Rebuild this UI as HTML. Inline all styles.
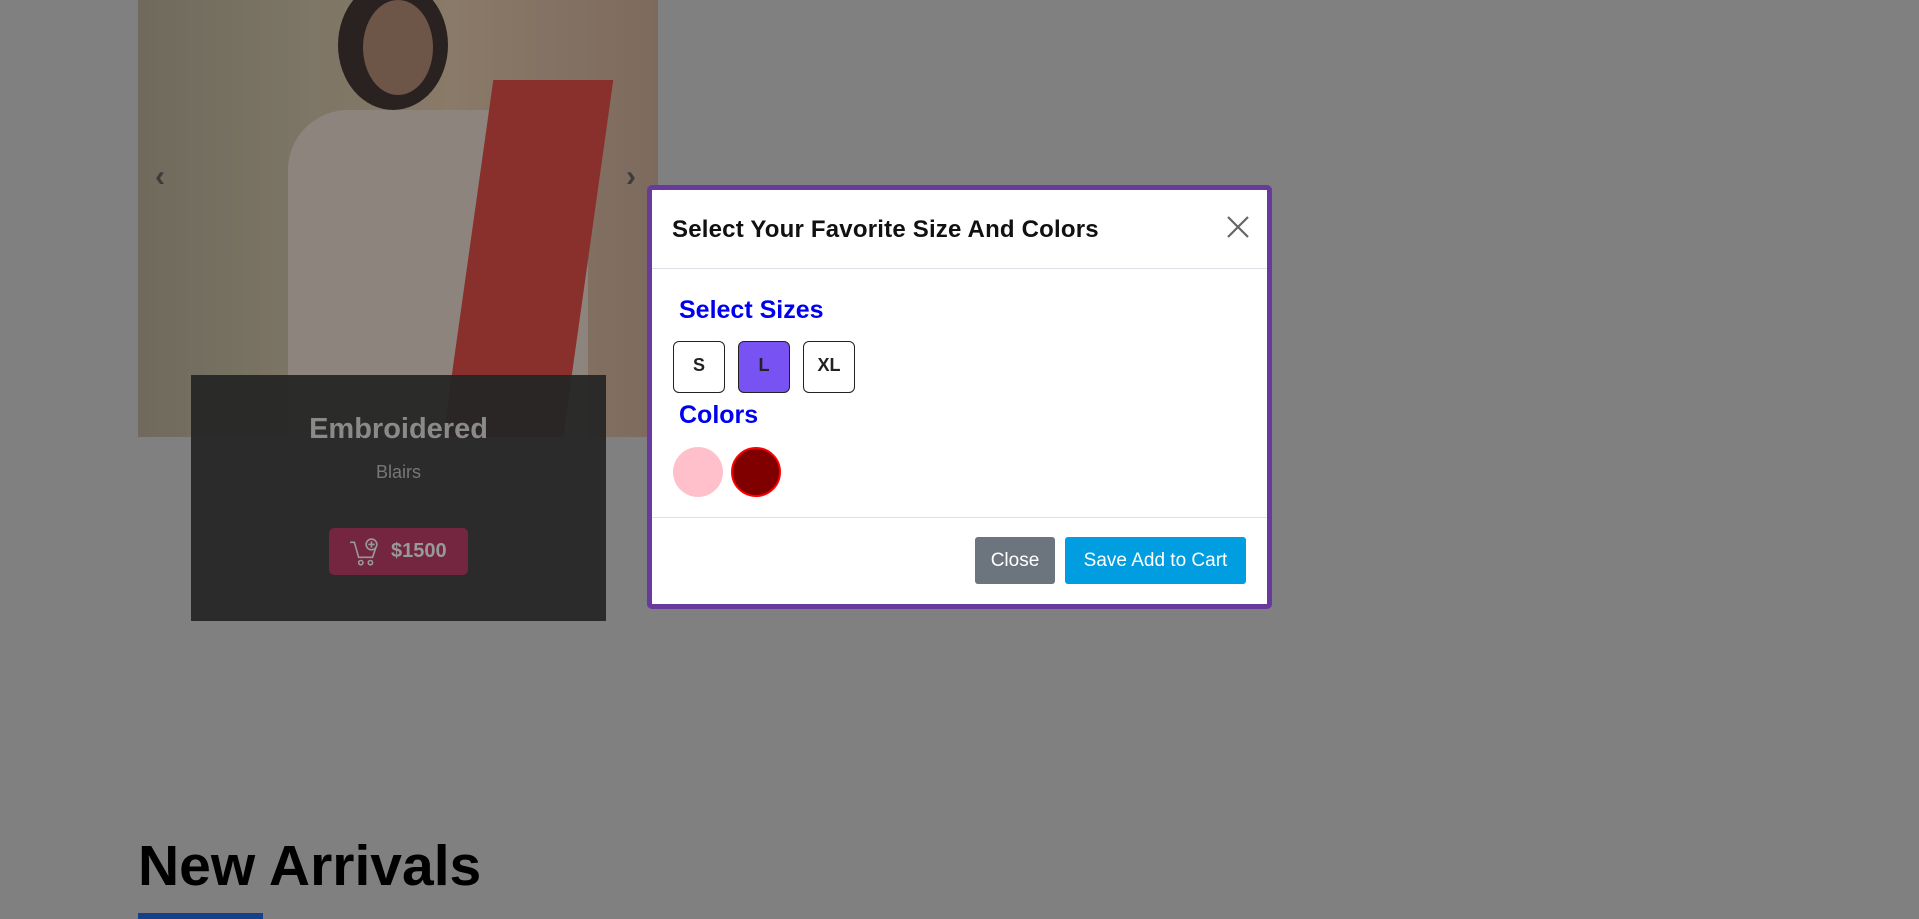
<!DOCTYPE html>
<html><head><meta charset="utf-8"><style>
*{box-sizing:border-box;margin:0;padding:0}
body{width:1919px;height:919px;overflow:hidden;background:#808080;font-family:"Liberation Sans",sans-serif;position:relative}
.img{position:absolute;left:138px;top:0;width:520px;height:437px;background:linear-gradient(90deg,#6f6a5c 0%,#7c7566 30%,#8a7a68 60%,#7d6a5e 100%);overflow:hidden}
.dress{position:absolute;left:150px;top:110px;width:300px;height:330px;background:#8d857d;border-radius:60px 60px 0 0}
.scarf{position:absolute;left:330px;top:80px;width:120px;height:360px;background:#8a302c;transform:skewX(-8deg)}
.head{position:absolute;left:200px;top:-20px;width:110px;height:130px;background:#2a2220;border-radius:50%}
.face{position:absolute;left:225px;top:0;width:70px;height:95px;background:#6d5548;border-radius:50%}
.arrow{position:absolute;top:160px;color:#3c3c3c;font-size:30px;font-weight:bold}
.cap{position:absolute;left:191px;top:375px;width:415px;height:246px;background:rgba(38,38,38,.95);text-align:center}
.cap h3{margin-top:38px;color:#8a8a8a;font-size:29px;font-weight:bold}
.cap p{margin-top:16px;color:#777;font-size:18px}
.price{position:absolute;left:138px;top:153px;width:139px;height:47px;background:#742540;border-radius:5px;color:#999;font-weight:bold;font-size:20px;line-height:47px;padding-left:62px;text-align:left}
.modal{position:absolute;left:647px;top:185px;width:625px;height:424px;background:#fff;border:5px solid #673a9b;border-radius:5px}
.title{position:absolute;left:20px;top:26px;font-size:24px;font-weight:bold;color:#111;letter-spacing:0.2px}
.x{position:absolute;right:18px;top:26px}
.hr{position:absolute;left:0;right:0;height:1px;background:#dee2e6}
.h{position:absolute;left:27px;color:#0000f0;font-size:25px;font-weight:bold}
.sz{position:absolute;top:151px;width:52px;height:52px;border:1.5px solid #222;border-radius:6px;font-weight:bold;font-size:18px;text-align:center;line-height:46px;color:#222}
.c{position:absolute;top:257px;width:50px;height:50px;border-radius:50%}
.btn{position:absolute;top:347px;height:47px;color:#fff;font-size:19px;line-height:47px;text-align:center;border-radius:3px}
</style></head><body>
<div class="img"><div class="dress"></div><div class="scarf"></div><div class="head"></div><div class="face"></div></div>
<div class="arrow" style="left:155px">&#8249;</div>
<div class="arrow" style="left:626px">&#8250;</div>
<div class="cap"><h3>Embroidered</h3><p>Blairs</p>
<div class="price"><svg style="position:absolute;left:20px;top:10px" width="30" height="30" viewBox="0 0 28 28" fill="none" stroke="#999" stroke-width="1.5"><path d="M1 4h4l4 14h13l3-9"/><circle cx="11" cy="23" r="2"/><circle cx="20" cy="23" r="2"/><circle cx="21" cy="6" r="5"/><path d="M21 3v6M18 6h6"/></svg>$1500</div></div>
<div style="position:absolute;left:138px;top:833px;font-size:57px;font-weight:bold;color:#000">New Arrivals</div>
<div style="position:absolute;left:138px;top:913px;width:125px;height:6px;background:#17408a"></div>
<div class="modal">
<div class="title">Select Your Favorite Size And Colors</div>
<svg class="x" width="22" height="22" viewBox="0 0 22 22" stroke="#666" stroke-width="2.2"><path d="M1 1L21 21M21 1L1 21"/></svg>
<div class="hr" style="top:78px"></div>
<div class="h" style="top:106px">Select Sizes</div>
<div class="sz" style="left:21px">S</div>
<div class="sz" style="left:86px;background:#7952f3">L</div>
<div class="sz" style="left:151px">XL</div>
<div class="h" style="top:211px">Colors</div>
<div class="c" style="left:21px;background:#ffc0cb"></div>
<div class="c" style="left:79px;background:#800000;border:2px solid red"></div>
<div class="hr" style="top:327px"></div>
<div class="btn" style="left:323px;width:80px;background:#6c757d">Close</div>
<div class="btn" style="left:413px;width:181px;background:#009ee0">Save Add to Cart</div>
</div>
</body></html>
